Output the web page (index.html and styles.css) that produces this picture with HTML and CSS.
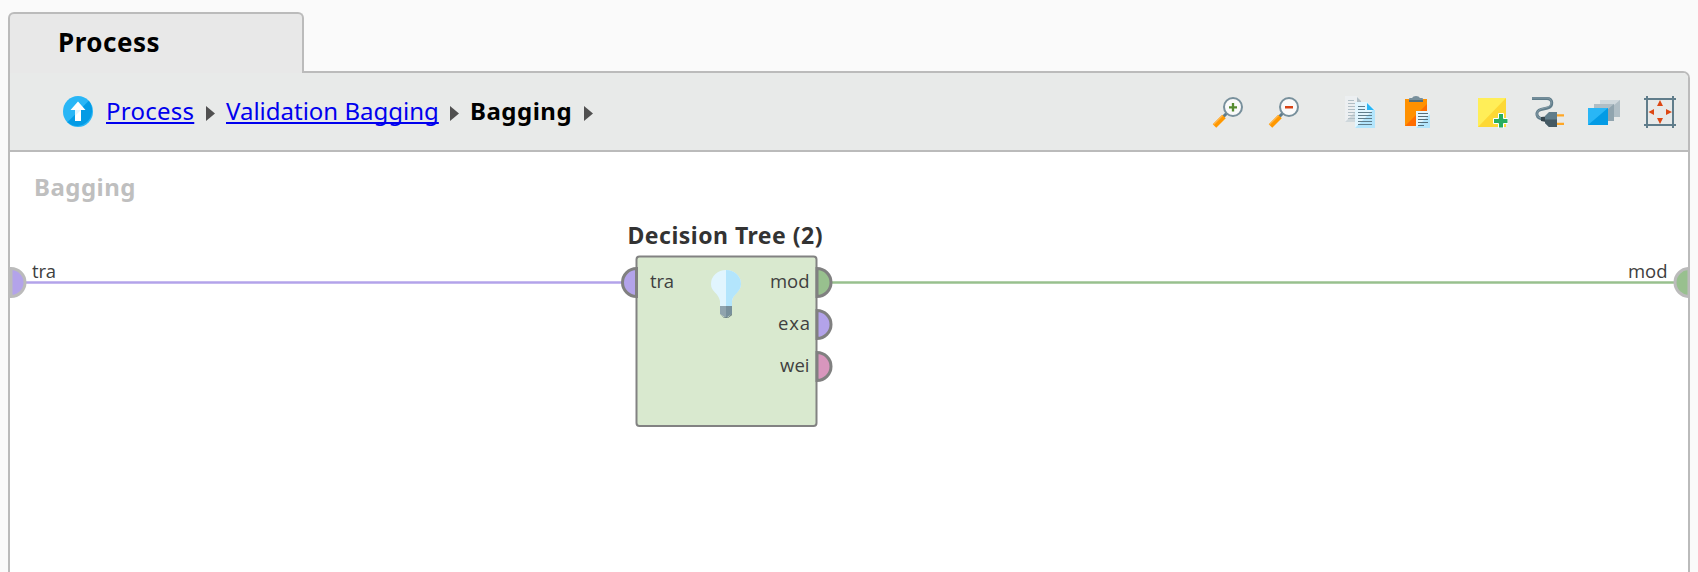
FILE: index.html
```html
<!DOCTYPE html>
<html lang="en">
<head>
<meta charset="utf-8">
<title>Process</title>
<link rel="stylesheet" href="styles.css">
</head>
<body>
<div class="tab"><span class="tab-label">Process</span></div>
<main class="panel">
  <header class="toolbar">
    <nav class="crumbs">
      <svg class="up" viewBox="0 0 30 31">
        <ellipse cx="15" cy="15.5" rx="15" ry="15.5" fill="#29b6f6"/>
        <path d="M25.8 4.8A15 15.5 0 0 1 4.4 26.3Z" fill="#039be5"/>
        <path d="M15 5.5 22.5 14H18V25H12V14H7.500Z" fill="#fff"/>
        <path d="M12 19 18 13V25H12Z" fill="#fff"/>
        <path d="M12 14H18L12 20Z" fill="#e1f5fe"/>
      </svg>
      <a class="crumb process" href="#">Process</a>
      <svg class="sep" viewBox="0 0 9 15"><path d="M0 0 9 7.500 0 15Z"/></svg>
      <a class="crumb validation" href="#">Validation Bagging</a>
      <svg class="sep" viewBox="0 0 9 15"><path d="M0 0 9 7.500 0 15Z"/></svg>
      <span class="crumb current">Bagging</span>
      <svg class="sep" viewBox="0 0 9 15"><path d="M0 0 9 7.500 0 15Z"/></svg>
    </nav>
    <div class="tools">
      <div class="group">
        <svg class="icon" viewBox="0 0 32 32">
          <path d="M11 21 14.500 17.500" stroke="#607d8b" stroke-width="3"/>
          <path d="M2.500 30 12 20.500" stroke="#ff9800" stroke-width="5"/>
          <path d="M1.500 28.500 10.500 19.500" stroke="#ffb74d" stroke-width="1.200"/>
          <circle cx="21" cy="11" r="9" fill="#fafafa" stroke="#78909c" stroke-width="2"/>
          <path d="M17 11.300H25M21 7V15.500" stroke="#558b2f" stroke-width="2.300"/>
        </svg>
        <svg class="icon" viewBox="0 0 32 32">
          <path d="M11 21 14.500 17.500" stroke="#607d8b" stroke-width="3"/>
          <path d="M2.500 30 12 20.500" stroke="#ff9800" stroke-width="5"/>
          <path d="M1.500 28.500 10.500 19.500" stroke="#ffb74d" stroke-width="1.200"/>
          <circle cx="21" cy="11" r="9" fill="#fafafa" stroke="#78909c" stroke-width="2"/>
          <path d="M17 11.300H25" stroke="#d84315" stroke-width="2.600"/>
        </svg>
      </div>
      <div class="group">
        <svg class="icon" viewBox="0 0 32 32">
          <path d="M1 0H13L17 5V26H1Z" fill="#eceff1"/>
          <path d="M1 26 17 10V26Z" fill="#cfd8dc"/>
          <path d="M13 1 17 5V6H13Z" fill="#b0bec5"/>
          <path d="M4 4.500H10M4 7.500H11M4 10.500H11M4 13.500H11M4 16.500H11M4 19.500H11M4 22.500H11" stroke="#b0bec5"/>
          <path d="M11 6H23L31 14V32H11Z" fill="#e1f5fe"/>
          <path d="M11 32 29 14H31V32Z" fill="#b3e5fc"/>
          <path d="M23 7 30 14H23Z" fill="#29b6f6"/>
          <path d="M14 10.500H21M14 13.500H21M14 16.500H28M14 19.500H28M14 22.500H28M14 25.500H28M14 28.500H28" stroke="#607d8b"/>
        </svg>
        <svg class="icon" viewBox="0 0 32 32">
          <path d="M5 3H27V30H5Z" fill="#ff9100"/>
          <path d="M5 30 27 8V30Z" fill="#ff6d00"/>
          <path d="M9 6V3Q9 2 10 2H12Q13 0 16 0T20 2H22Q23 2 23 3V6Z" fill="#78909c"/>
          <path d="M9 4H23V6H9Z" fill="#546e7a"/>
          <path d="M16 15H30V32H16Z" fill="#e1f5fe"/>
          <path d="M16 32 30 18V32Z" fill="#b3e5fc"/>
          <path d="M18 17.500H28M18 20.500H28M18 23.500H28M18 26.500H28M18 29.500H24" stroke="#546e7a"/>
        </svg>
      </div>
      <div class="group">
        <svg class="icon" viewBox="0 0 32 32">
          <path d="M2 2H30V31H2Z" fill="#ffee58"/>
          <path d="M2 31 30 2V31Z" fill="#fdd835"/>
          <path d="M22.500 17.500H27.500V22.500H32V27.500H27.500V32H22.500V27.500H17.500V22.500H22.500Z" fill="#27ae60" stroke="#fff"/>
        </svg>
        <svg class="icon" viewBox="0 0 32 32">
          <path d="M0 2.500H15C21 2.500 21.500 10.500 15.500 12L9 13.500C3 15 3 23 13 23.300" fill="none" stroke="#607d8b" stroke-width="3"/>
          <path d="M0 2H15C20 2 21 9 16 11L9 13C4 15 3 21 9 22" fill="none" stroke="#90a4ae" stroke-width=".8"/>
          <path d="M9 21 14 20.500V26L9 25Z" fill="#37474f"/>
          <path d="M13 20 17 16H25V31H17L13 27Z" fill="#607d8b"/>
          <path d="M13 23.500H25V31H17L13 27Z" fill="#455a64"/>
          <path d="M25 19.300H32M25 27.800H32" stroke="#ffa726" stroke-width="2.300"/>
        </svg>
        <svg class="icon" viewBox="0 0 32 32">
          <path d="M12 4H32V21H12Z" fill="#cfd8dc"/><path d="M12 21 32 4V21Z" fill="#b0bec5"/>
          <path d="M6 8H26V25H6Z" fill="#b0bec5"/><path d="M6 25 26 8V25Z" fill="#90a4ae"/>
          <path d="M0 12H20V29H0Z" fill="#29b6f6"/><path d="M0 29 20 12V29Z" fill="#039be5"/>
        </svg>
        <svg class="icon" viewBox="0 0 32 32">
          <path d="M3 0V32M29 0V32M0 3H32M0 29H32" stroke="#607d8b" stroke-width="2"/>
          <path d="M16 4 19 10H13ZM16 28 19 22H13ZM4.500 16 10 13V19ZM28 16 22 13V19Z" fill="#dd4814"/>
        </svg>
      </div>
    </div>
  </header>
  <svg class="canvas" viewBox="10 152 1678 420">
    <text class="canvas-title" x="34" y="196" textLength="101.500">Bagging</text>

    <path d="M25 282.500H622" stroke="#b3a3ea" stroke-width="2.600"/>
    <path d="M831 282.500H1674" stroke="#98c08e" stroke-width="2.600"/>

    <path class="port-outer data" d="M11 268.500A14 14 0 0 1 11 296.500Z"/>
    <path class="port-outer model" d="M1689 268.500A14 14 0 0 0 1689 296.500Z"/>
    <text class="label" x="32" y="278" textLength="24">tra</text>
    <text class="label" x="1628" y="278" textLength="39.500">mod</text>

    <text class="node-title" x="627.500" y="244" textLength="195">Decision Tree (2)</text>
    <rect class="node" x="636.500" y="256.500" width="180" height="169.500" rx="3"/>
    <path class="port data" d="M636.500 268.500A14 14 0 0 0 636.500 296.500Z"/>
    <path class="port model" d="M817 268.500A14 14 0 0 1 817 296.500Z"/>
    <path class="port data" d="M817 310.500A14 14 0 0 1 817 338.500Z"/>
    <path class="port weights" d="M817 352.500A14 14 0 0 1 817 380.500Z"/>
    <text class="label" x="650" y="288" textLength="24">tra</text>
    <text class="label" x="770" y="288" textLength="39.500">mod</text>
    <text class="label" x="778" y="330" textLength="32">exa</text>
    <text class="label" x="780" y="372" textLength="29.500">wei</text>

    <path d="M720 306V301C718 292 711 292 711 284A15 14 0 0 1 741 284C741 292 734 292 732 301V306Z" fill="#e1f5fe"/>
    <path d="M726 270A15 14 0 0 1 741 284C741 292 733 294 732 301V306H726Z" fill="#b3e5fc"/>
    <path d="M720 306H726V318L720 314Z" fill="#90a4ae"/>
    <path d="M726 306H732V314L726 318Z" fill="#78909c"/>
    <path d="M720 314 724 317.500H728L732 314V315L728 318H724Z" fill="#455a64"/>
  </svg>
</main>
</body>
</html>
```
FILE: styles.css
```css
* { box-sizing: border-box; }
body {
  margin: 0;
  height: 572px;
  padding: 12px 8px 0;
  overflow: hidden;
  background: #fafafa;
  font-family: "Noto Sans", "Open Sans", sans-serif;
  display: flex;
  flex-direction: column;
}
.tab {
  width: 296px;
  height: 61px;
  margin-bottom: -2px;
  padding: 0 0 0 48px;
  border: 2px solid #bbb;
  border-bottom: 0;
  border-radius: 6px 6px 0 0;
  background: #e8e8e8;
  position: relative;
  z-index: 1;
}
.tab-label {
  font-size: 26px;
  line-height: 57px;
  font-weight: 700;
  letter-spacing: .5px;
}
.panel {
  flex: 1;
  border: 2px solid #bbb;
  border-bottom: 0;
  border-radius: 0 7px 0 0;
  background: #fff;
  overflow: hidden;
  display: flex;
  flex-direction: column;
}
.toolbar {
  height: 79px;
  flex: none;
  padding: 0 12px 0 53px;
  border-bottom: 2px solid #bbb;
  background: #e8eae9;
  display: flex;
  align-items: center;
  justify-content: space-between;
}
.crumbs, .tools, .group { display: flex; align-items: center; }
.up { width: 30px; height: 31px; margin-right: 13px; }
.crumb {
  flex: none;
  font-size: 24px;
  line-height: 34px;
  padding-bottom: 2px;
  white-space: nowrap;
  color: #00e;
  text-decoration-thickness: 2px;
  text-underline-offset: 2px;
  text-decoration-skip-ink: none;
}
.process { width: 88px; letter-spacing: .25px; }
.validation { width: 212px; }
.current { width: 102px; color: #000; font-weight: 700; letter-spacing: .5px; }
.sep { width: 9px; height: 15px; margin: 3px 11px 0 12px; fill: #505050; }
.tools { gap: 44px; }
.group { gap: 24px; }
.icon { width: 32px; height: 32px; display: block; }
.canvas { display: block; width: 1678px; height: 420px; }
.canvas-title { font-size: 24px; font-weight: 700; fill: #bfbfbf; }
.node-title { font-size: 23px; font-weight: 700; fill: #333; }
.label { font-family: "Open Sans", sans-serif; font-size: 18.5px; fill: #404040; }
.node { fill: #d9e9cf; stroke: #828282; stroke-width: 2; }
.port { stroke: #808080; stroke-width: 3; }
.port-outer { stroke: #bbb; stroke-width: 3; }
.data { fill: #b3a3ea; }
.model { fill: #98c08e; }
.weights { fill: #d896bd; }
```
